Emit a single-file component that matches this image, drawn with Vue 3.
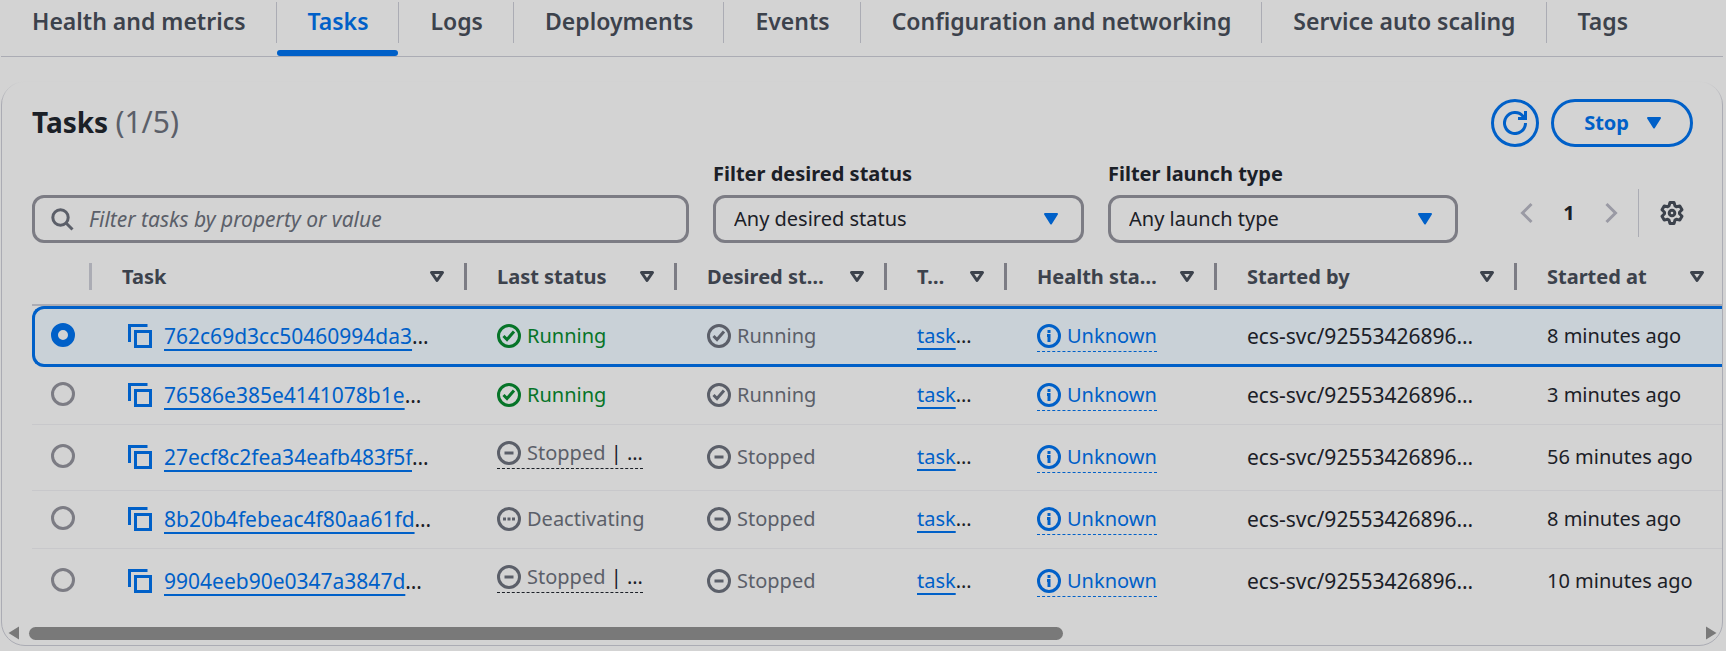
<script setup>
import { ref } from 'vue'

const tabs = ['Health and metrics', 'Tasks', 'Logs', 'Deployments', 'Events', 'Configuration and networking', 'Service auto scaling', 'Tags']
const activeTab = ref('Tasks')

const columns = [
  { key: 'task', label: 'Task' },
  { key: 'last', label: 'Last status' },
  { key: 'desired', label: 'Desired st…' },
  { key: 'definition', label: 'T…' },
  { key: 'health', label: 'Health sta…' },
  { key: 'by', label: 'Started by' },
  { key: 'at', label: 'Started at' },
]

const rows = [
  { id: '762c69d3cc50460994da3', last: 'Running', desired: 'Running', at: '8 minutes ago' },
  { id: '76586e385e4141078b1e', last: 'Running', desired: 'Running', at: '3 minutes ago' },
  { id: '27ecf8c2fea34eafb483f5f', last: 'Stopped', desired: 'Stopped', more: true, at: '56 minutes ago' },
  { id: '8b20b4febeac4f80aa61fd', last: 'Deactivating', desired: 'Stopped', at: '8 minutes ago' },
  { id: '9904eeb90e0347a3847d', last: 'Stopped', desired: 'Stopped', more: true, at: '10 minutes ago' },
]
const selected = ref(rows[0].id)

const glyphs = {
  Running: 'M6.5 12l3.5 3.5 7-8',
  Stopped: 'M7.5 12h9',
  Deactivating: 'M6 12h3M10.5 12h3M15 12h3',
}
</script>

<template>
  <div class="page">
    <nav class="tabs" role="tablist">
      <button
        v-for="tab in tabs"
        :key="tab"
        type="button"
        role="tab"
        class="tab"
        :class="{ active: tab === activeTab }"
        :aria-selected="tab === activeTab"
        @click="activeTab = tab"
      >
        <span class="tab-label">{{ tab }}</span>
      </button>
    </nav>

    <section class="card">
      <header class="head">
        <h2>Tasks <span class="count">(1/5)</span></h2>
        <div class="actions">
          <button type="button" class="btn round" aria-label="Refresh">
            <svg width="24" height="24" viewBox="0 0 24 24" fill="none" stroke="currentColor" stroke-width="3">
              <path d="M22.5 12a10.5 10.5 0 1 1-2.5-6.8L22 8" />
              <path d="M22.5 0v7.500H15" />
            </svg>
          </button>
          <button type="button" class="btn stop">
            Stop
            <svg width="16" height="14" viewBox="0 0 16 14"><path class="solid" d="M2 2h12L8 11.500z" /></svg>
          </button>
        </div>
      </header>

      <div class="filters">
        <div class="search">
          <svg width="24" height="24" viewBox="0 0 24 24" fill="none" stroke="currentColor" stroke-width="3">
            <circle cx="10.500" cy="10.500" r="7.700" />
            <path d="M16 16l6.500 6.500" />
          </svg>
          <input type="text" placeholder="Filter tasks by property or value" aria-label="Filter tasks" />
        </div>
        <div class="field">
          <label for="desired">Filter desired status</label>
          <div class="select">
            <select id="desired"><option>Any desired status</option></select>
            <svg width="16" height="14" viewBox="0 0 16 14"><path class="solid" d="M2 2h12L8 11.500z" /></svg>
          </div>
        </div>
        <div class="field">
          <label for="launch">Filter launch type</label>
          <div class="select">
            <select id="launch"><option>Any launch type</option></select>
            <svg width="16" height="14" viewBox="0 0 16 14"><path class="solid" d="M2 2h12L8 11.500z" /></svg>
          </div>
        </div>
        <div class="pager">
          <button type="button" class="icon dim" aria-label="Previous page">
            <svg width="24" height="24" viewBox="0 0 24 24" fill="none" stroke="currentColor" stroke-width="3"><path d="M16.500 3L7.500 12l9 9" /></svg>
          </button>
          <button type="button" class="icon number">1</button>
          <button type="button" class="icon dim" aria-label="Next page">
            <svg width="24" height="24" viewBox="0 0 24 24" fill="none" stroke="currentColor" stroke-width="3"><path d="M7.500 3l9 9-9 9" /></svg>
          </button>
          <span class="divider"></span>
          <button type="button" class="icon gear" aria-label="Preferences">
            <svg width="24" height="24" viewBox="0 0 24 24" fill="none" stroke="currentColor" stroke-width="3" stroke-linejoin="round">
              <path d="M10 1.500h4l1 3.400 1.400.8 3.400-.8 2.200 3.800L19.500 11.200v1.600l2.500 2.500-2.200 3.800-3.400-.8-1.400.8-1 3.400h-4l-1-3.400-1.400-.8-3.400.8L2 15.300l2.500-2.500v-1.600L2 8.700l2.200-3.800 3.400.8 1.400-.8z" />
              <circle cx="12" cy="12" r="2.800" />
            </svg>
          </button>
        </div>
      </div>

      <div class="table-wrap">
        <table>
          <colgroup>
            <col class="c-radio" />
            <col v-for="c in columns" :key="c.key" :class="'c-' + c.key" />
          </colgroup>
          <thead>
            <tr>
              <th class="first"><div class="th"></div></th>
              <th v-for="c in columns" :key="c.key" scope="col">
                <div class="th">
                  <span>{{ c.label }}</span>
                  <svg width="16" height="14" viewBox="0 0 16 14"><path class="hollow" d="M2.500 2.500h11L8 10.500z" /></svg>
                </div>
              </th>
            </tr>
          </thead>
          <tbody>
            <tr v-for="r in rows" :key="r.id" :class="{ selected: r.id === selected, tall: r.more }">
              <td class="pick"><input v-model="selected" type="radio" name="task" :value="r.id" :aria-label="'Select task ' + r.id" /></td>
              <td>
                <div class="line task">
                  <button type="button" class="copy" aria-label="Copy task ID">
                    <svg width="24" height="24" viewBox="0 0 24 24" fill="none" stroke="currentColor" stroke-width="3">
                      <path d="M1.500 18V1.500h18" />
                      <rect x="7.500" y="7.500" width="15" height="15" />
                    </svg>
                  </button>
                  <span class="code"><a href="#">{{ r.id }}</a>…</span>
                </div>
              </td>
              <td>
                <div class="line">
                  <span class="status" :class="{ ok: r.last === 'Running', dashed: r.more }">
                    <svg width="24" height="24" viewBox="0 0 24 24" fill="none" stroke="currentColor" stroke-width="3">
                      <circle cx="12" cy="12" r="10.500" /><path :d="glyphs[r.last]" />
                    </svg>
                    <span>{{ r.last }}<span v-if="r.more" class="more"> | …</span></span>
                  </span>
                </div>
              </td>
              <td>
                <div class="line">
                  <span class="status">
                    <svg width="24" height="24" viewBox="0 0 24 24" fill="none" stroke="currentColor" stroke-width="3">
                      <circle cx="12" cy="12" r="10.500" /><path :d="glyphs[r.desired]" />
                    </svg>
                    <span>{{ r.desired }}</span>
                  </span>
                </div>
              </td>
              <td><div class="line"><span><a href="#">task</a>…</span></div></td>
              <td>
                <div class="line">
                  <span class="status info">
                    <svg width="24" height="24" viewBox="0 0 24 24" fill="none" stroke="currentColor" stroke-width="3">
                      <circle cx="12" cy="12" r="10.500" /><path d="M12 6v3M10 11.500h2V18" />
                    </svg>
                    <span>Unknown</span>
                  </span>
                </div>
              </td>
              <td class="code">ecs-svc/92553426896…</td>
              <td>{{ r.at }}</td>
            </tr>
          </tbody>
        </table>
      </div>

      <div class="scroll">
        <svg width="12" height="14" viewBox="0 0 12 14"><path d="M11 .5v13L.5 7z" /></svg>
        <div class="track"><div class="thumb"></div></div>
        <svg width="12" height="14" viewBox="0 0 12 14"><path d="M1 .5v13L11.500 7z" /></svg>
      </div>
    </section>
  </div>
</template>

<style>
body {
  background: #d3d3d3;
}
</style>

<style scoped>
.page {
  --blue: #0060c8;
  --ink: #1b2027;
  --muted: #5b5f69;
  --head: #3c424c;
  --edge: #7c7c84;
  --rule: #abacb4;
  padding: 0 3px 5px 1px;
  overflow: hidden;
  font-family: "Noto Sans", "Open Sans", sans-serif;
  font-size: 20px;
  line-height: 30px;
  color: var(--ink);
}
.page *, .page *::before, .page *::after { box-sizing: border-box; }
button, input, select {
  margin: 0;
  padding: 0;
  border: 0;
  background: none;
  font: inherit;
  color: inherit;
}
svg { display: block; flex: none; }
.solid { fill: currentColor; stroke: currentColor; stroke-width: 2; stroke-linejoin: round; }
.hollow { fill: none; stroke: currentColor; stroke-width: 3; stroke-linejoin: round; }

.tabs {
  display: flex;
  border-bottom: 1px solid var(--rule);
}
.tab {
  flex: none;
  padding: 2px 0 7px;
  border-bottom: 6px solid transparent;
  font-size: 23px;
  font-weight: 600;
  color: var(--head);
  height: 56px;
  position: relative;
}
.tab-label {
  display: flex;
  height: 41px;
  padding: 0 30px 3px 31px;
  align-items: center;
  border-right: 1px solid var(--rule);
}
.tab:last-child .tab-label { border-right: 0; }
.tab.active { color: var(--blue); }
.tab.active::after {
  content: "";
  position: absolute;
  left: 0;
  right: 1px;
  bottom: -6px;
  height: 6px;
  border-radius: 3px;
  background: var(--blue);
}

.card {
  position: relative;
  margin-top: 24px;
  border: 1px solid var(--rule);
  border-radius: 24px;
}
.card::before {
  content: "";
  position: absolute;
  top: -1px;
  left: 0;
  right: 0;
  height: 24px;
  background: linear-gradient(#d3d3d3, transparent);
}
.head {
  position: relative;
  display: flex;
  justify-content: space-between;
  padding: 17px 29px 0 30px;
}
h2 {
  margin: 0;
  font-size: 28px;
  font-weight: 700;
  line-height: 46px;
}
.count { font-size: 30px; font-weight: 400; color: var(--muted); }
.actions { display: flex; gap: 12px; }
.btn {
  display: flex;
  align-items: center;
  justify-content: center;
  height: 48px;
  border: 3px solid var(--blue);
  border-radius: 24px;
  color: var(--blue);
  font-weight: 700;
}
.round { width: 48px; }
.stop { gap: 17px; padding: 0 28px 0 30px; }

.filters {
  display: grid;
  grid-template-columns: 1fr 371px 350px 211px;
  gap: 24px;
  align-items: end;
  padding: 12px 29px 0 30px;
}
.search, .select {
  display: flex;
  align-items: center;
  height: 48px;
  border: 3px solid var(--edge);
  border-radius: 12px;
}
.search { padding: 0 15px; gap: 15px; color: var(--muted); }
.search input { flex: 1; min-width: 0; height: 40px; outline: 0; font-size: 21px; }
.search input::placeholder { color: var(--muted); font-style: italic; opacity: 1; }
.field label { display: block; height: 36px; font-weight: 700; }
.select { padding-right: 22px; }
.select select { flex: 1; min-width: 0; height: 42px; padding-left: 18px; appearance: none; outline: 0; }
.select svg { color: var(--blue); pointer-events: none; }
.pager {
  display: flex;
  align-items: center;
  justify-content: flex-end;
  height: 48px;
  margin-bottom: 6px;
  padding-right: 9px;
}
.icon { display: grid; place-items: center; width: 42px; height: 48px; }
.dim { color: #9a9aa4; }
.number { font-weight: 700; }
.divider { width: 1px; height: 48px; margin: 0 21px 0 6px; background: var(--rule); }
.gear { width: 24px; color: var(--head); }

.table-wrap { margin: 6px 0 0 30px; overflow: hidden; }
table {
  width: 100%;
  min-width: 1695px;
  table-layout: fixed;
  border-collapse: separate;
  border-spacing: 0;
}
.c-radio { width: 60px; }
.c-task { width: 375px; }
.c-last, .c-desired, .c-health { width: 210px; }
.c-definition { width: 120px; }
.c-by { width: 300px; }
th {
  height: 57px;
  padding: 0;
  border-bottom: 2px solid var(--rule);
  font-weight: 700;
  text-align: left;
  color: var(--head);
}
.th {
  display: flex;
  align-items: center;
  justify-content: space-between;
  height: 27px;
  padding: 0 19px 0 30px;
  border-right: 3px solid var(--edge);
  white-space: nowrap;
}
.first .th { border-color: var(--rule); }
th:last-child .th { border-color: transparent; }
td {
  height: 58px;
  padding: 0 0 2px 30px;
  border-bottom: 1px solid #c8c8cb;
  vertical-align: middle;
  white-space: nowrap;
}
.tall td { height: 66px; }
tr:last-child td { border-bottom: 0; }
td.pick { padding: 0 0 4px 19px; }
.selected td {
  height: 61px;
  border-top: 3px solid var(--blue);
  border-bottom: 3px solid var(--blue);
  background: #c9d1d7;
}
.selected td.pick {
  padding-left: 16px;
  border-left: 3px solid var(--blue);
  border-radius: 12px 0 0 12px;
}
input[type="radio"] {
  display: block;
  width: 24px;
  height: 24px;
  appearance: none;
  border: 3px solid var(--edge);
  border-radius: 50%;
}
input[type="radio"]:checked { border: 7px solid var(--blue); background: #d3d3d3; }
.line { display: flex; align-items: center; }
.task { gap: 12px; padding-left: 6px; }
.copy { color: var(--blue); }
.code { font-size: 21px; }
a {
  color: var(--blue);
  text-decoration: underline;
  text-decoration-thickness: 2px;
  text-underline-offset: 5px;
  text-decoration-skip-ink: none;
}
.status { display: flex; align-items: center; gap: 6px; color: var(--muted); }
.ok { color: #067428; }
.info { color: var(--blue); border-bottom: 1px dashed var(--blue); margin-bottom: -1px; }
.dashed { border-bottom: 1px dashed var(--ink); margin-bottom: 7px; }
.more { color: var(--ink); }

.scroll {
  display: flex;
  align-items: center;
  justify-content: space-between;
  gap: 9px;
  height: 14px;
  margin: 11px 5px 5px 6px;
  fill: #797979;
}
.track { flex: 1; }
.thumb { width: 62%; height: 13px; border-radius: 7px; background: #797979; }
</style>
